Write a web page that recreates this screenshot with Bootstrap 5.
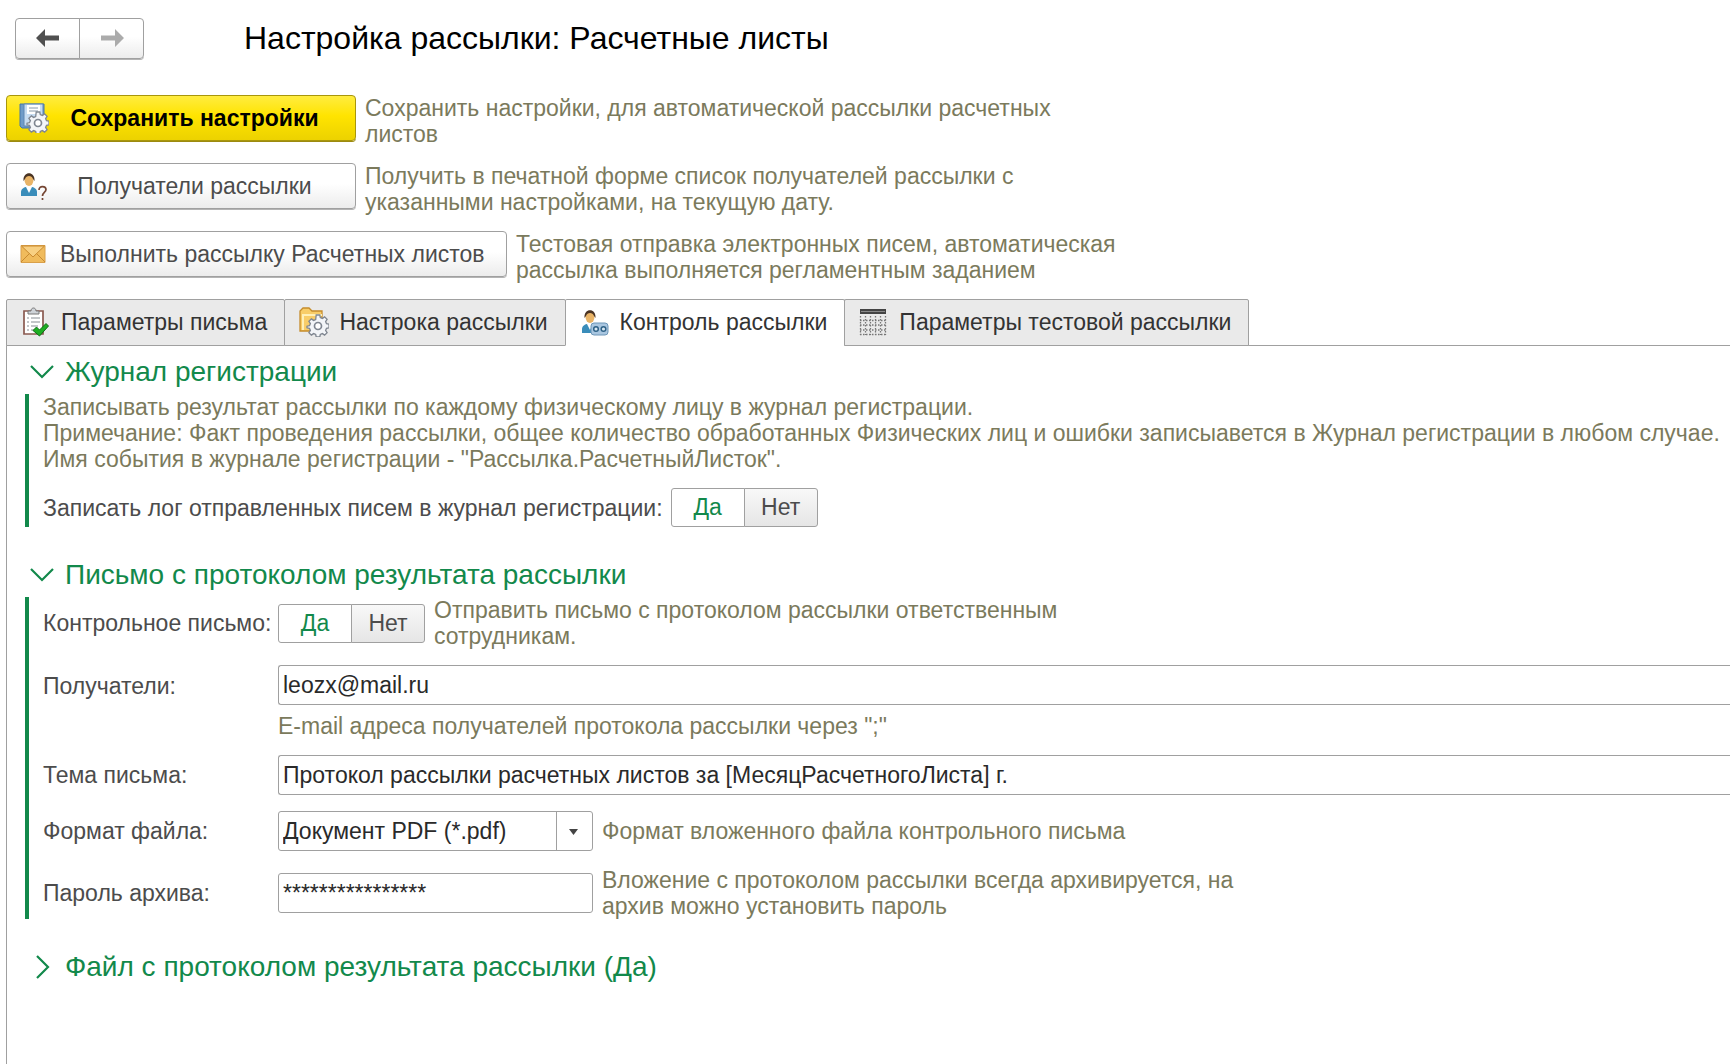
<!DOCTYPE html>
<html lang="ru">
<head>
<meta charset="utf-8">
<meta name="viewport" content="width=device-width, initial-scale=1">
<title>Настройка рассылки: Расчетные листы</title>
<link href="https://cdn.jsdelivr.net/npm/bootstrap@5.3.0/dist/css/bootstrap.min.css" rel="stylesheet">
<style>
  :root { --line: #a0a0a0; --green: #12894b; --note: #7b7a5c; --ink: #4c4c4c; }
  body { font-family: "Liberation Sans", Arial, sans-serif; font-size: 23px; line-height: 26px; color: var(--ink); background: #fff; }
  .page { padding: 17px 0 0 6px; }
  .btn, .form-control, .form-select, .nav-link { font-size: 23px; line-height: 26px; }
  .page-head { padding-left: 9px; margin-bottom: 36px; gap: 100px; }
  .page-title { font-size: 32px; line-height: 42px; color: #000; }
  .btn-soft { --bs-btn-color: var(--ink); --bs-btn-border-color: var(--line); --bs-btn-hover-color: var(--ink); --bs-btn-hover-border-color: #888; --bs-btn-border-radius: 4px;
    background-image: linear-gradient(#fff 45%, #ececec); box-shadow: 0 1px 0 #b4b4b4; }
  .btn-arrow { width: 65px; height: 41px; padding: 0; }
  .btn-arrow svg { display: block; margin: 0 auto; }
  .btn-act { height: 46px; padding: 0 12px; gap: 11px; display: flex; align-items: center; white-space: nowrap; }
  .act-wide { width: 350px; padding-right: 26px; }
  .act-wide .act-text { flex: 1; }
  .act-main { --bs-btn-color: #000; --bs-btn-hover-color: #000; --bs-btn-border-color: #a8960c; --bs-btn-hover-border-color: #8c7c00;
    background-image: linear-gradient(#ffec40, #ffe400 45%, #ecd200); box-shadow: 0 1px 0 #9c8a10; font-weight: 700; }
  .act-long { width: 501px; }
  .act-row { gap: 9px; margin-bottom: 16px; }
  .note { color: var(--note); margin: 0; }
  .ico { width: 30px; height: 30px; flex: none; }
  .nav-tabs { --bs-nav-tabs-border-color: var(--line); }
  .nav-tabs .nav-link { height: 47px; padding: 0 17px 2px 14px; gap: 10px; color: #333; background: #eaeaea; border: 1px solid var(--line); border-radius: 2px 2px 0 0; margin-right: -1px; display: flex; align-items: center; }
  .nav-tabs .nav-link.active { color: #333; background: #fff; border-color: var(--line) var(--line) #fff; }
  .panel { border-left: 1px solid var(--line); padding: 9px 0 0 18px; min-height: calc(100vh - 346px); }
  .group-head { font-size: 28px; line-height: 34px; margin: 0 0 5px; }
  .group-head button { color: var(--green); background: none; border: 0; padding: 0 0 0 5px; gap: 11px; display: flex; align-items: center; }
  .group-head svg { width: 24px; height: 24px; }
  .group-body { border-left: 4px solid var(--green); padding-left: 14px; margin-bottom: 31px; }
  .stack { display: grid; gap: 16px; }
  .fields { display: grid; grid-template-columns: 227px 1fr; gap: 16px 8px; align-items: center; }
  .hint-row { gap: 9px; }
  .toggle { width: 147px; height: 39px; }
  .toggle .btn { --bs-btn-color: var(--ink); --bs-btn-border-color: var(--line); --bs-btn-hover-border-color: var(--line); --bs-btn-hover-color: var(--ink);
    --bs-btn-active-color: var(--green); --bs-btn-active-bg: #fff; --bs-btn-active-border-color: var(--line); --bs-btn-border-radius: 3px;
    flex: 1 1 0; padding: 0; line-height: 37px; background-image: linear-gradient(#f8f8f8, #e6e6e6); }
  .toggle .btn-check:checked + .btn { background-image: none; }
  .form-control, .form-select { height: 40px; padding: 0 4px; color: #2a2a2a; border-color: var(--line); border-radius: 3px; }
  .to-edge { border-right: 0; border-top-right-radius: 0; border-bottom-right-radius: 0; }
  .mid { width: 315px; flex: none; }
  .form-select { background: #fff url("data:image/svg+xml,%3Csvg xmlns='http://www.w3.org/2000/svg' width='36' height='38'%3E%3Cpath d='M.5 0v38' stroke='%23a0a0a0'/%3E%3Cpath d='M13 17h9l-4.500 6z' fill='%23444'/%3E%3C/svg%3E") no-repeat right center / 36px 38px; }
</style>
</head>
<body>
<svg width="0" height="0" class="position-absolute" aria-hidden="true">
  <defs>
    <g id="gear"><path d="M-1.800-9.500h3.600l.5 2.500 2.100.9 2.200-1.500 2.500 2.500-1.500 2.200.9 2.100 2.500.5v3.600l-2.500.5-.9 2.100 1.500 2.200-2.500 2.500-2.200-1.500-2.100.9-.5 2.500h-3.600l-.5-2.500-2.100-.9-2.200 1.500-2.500-2.500 1.500-2.200-.9-2.100-2.500-.5V1.700l2.500-.5.9-2.100-1.500-2.200 2.500-2.500 2.200 1.500 2.100-.9z" transform="translate(0 -1.500)" fill="#f3f5f8" stroke="#7f8690" stroke-width="1.300"/><circle r="3.500" fill="#fff" stroke="#7f8690" stroke-width="1.700"/></g>
    <g id="person"><path d="M1 25v-4c0-3 3-5 6-5h4c3 0 6 2 6 5v4z" fill="#3a8dba"/><path d="M6 16l3 6 3-6z" fill="#fff"/><ellipse cx="9" cy="9" rx="4.500" ry="6" fill="#e9b467"/><path d="M3.500 10C2.500-.5 15.500-.5 14.500 10l-1.500-2c-1-4-7-4-8 0z" fill="#4a3322"/></g>
  </defs>
</svg>
<main class="page">
  <header class="page-head d-flex align-items-center">
    <div class="btn-group">
      <button type="button" class="btn btn-soft btn-arrow" aria-label="Назад"><svg width="26" height="22" viewBox="0 0 26 22"><path d="M1 11l9-9v6.500h14v5H10V20z" fill="#505050"/></svg></button>
      <button type="button" class="btn btn-soft btn-arrow" aria-label="Вперед"><svg width="26" height="22" viewBox="0 0 26 22"><path d="M25 11l-9-9v6.500H2v5h14V20z" fill="#ababab"/></svg></button>
    </div>
    <h1 class="page-title m-0 fw-normal">Настройка рассылки: Расчетные листы</h1>
  </header>

  <div class="act-row d-flex align-items-start">
    <button type="button" class="btn btn-soft btn-act act-wide act-main">
      <svg class="ico" viewBox="0 0 30 30"><path d="M1 1h24v24H3l-2-2z" fill="#6f9bc8" stroke="#4477a8"/><path d="M5 1h19v22H5z" fill="#c6dcf2" stroke="#5e86b2"/><path d="M8 2h13v9H8z" fill="#fff"/><path d="M10 5h9M10 8h9" stroke="#8899aa"/><use href="#gear" x="19" y="20"/></svg>
      <span class="act-text">Сохранить настройки</span>
    </button>
    <p class="note">Сохранить настройки, для автоматической рассылки расчетных<br>листов</p>
  </div>
  <div class="act-row d-flex align-items-start">
    <button type="button" class="btn btn-soft btn-act act-wide">
      <svg class="ico" viewBox="0 0 30 30"><use href="#person" x="1"/><path d="M20 19c0-5 7-4 7-.5 0 3-3.500 3-3.500 6.500M23.500 27v2" fill="none" stroke="#754634" stroke-width="1.700"/></svg>
      <span class="act-text">Получатели рассылки</span>
    </button>
    <p class="note">Получить в печатной форме список получателей рассылки с<br>указанными настройками, на текущую дату.</p>
  </div>
  <div class="act-row d-flex align-items-start">
    <button type="button" class="btn btn-soft btn-act act-long">
      <svg class="ico" viewBox="0 0 30 30"><path d="M2 6.500h24v17H2z" fill="#f0bb5c" stroke="#d9a04a"/><path d="M2 23l9-9M26 23l-9-9" stroke="#c98a30"/><path d="M2.500 7L14 18 25.500 7z" fill="#f8d082" stroke="#c98a30"/></svg>
      <span class="act-text">Выполнить рассылку Расчетных листов</span>
    </button>
    <p class="note">Тестовая отправка электронных писем, автоматическая<br>рассылка выполняется регламентным заданием</p>
  </div>

  <div class="nav nav-tabs" role="tablist">
    <button type="button" class="nav-link" role="tab"><svg class="ico" viewBox="0 0 30 30"><path d="M3 4h19v23H3z" fill="#fff" stroke="#8a5a50" stroke-width="1.700"/><path d="M7 7V4h3c0-4 5-4 5 0h3v3z" fill="#cfd3d8" stroke="#777"/><path d="M6 11h2M10 11h9M6 15h2M10 15h9M6 19h2M10 19h7M6 23h2M10 23h3" stroke="#b0b4b8" stroke-width="1.500"/><path d="M12 23.500l3.500-3.500 3 3 6.500-6.500 2.500 2.500-9 10z" fill="#1eae22" stroke="#0d6f16"/></svg>Параметры письма</button>
    <button type="button" class="nav-link" role="tab"><svg class="ico" viewBox="0 0 30 30"><path d="M1 24V4l3-3h6l3 3h10v20z" fill="#f8cd68" stroke="#c58c2b" stroke-width="1.300"/><path d="M4 23V8h19" fill="none" stroke="#fff0b8" stroke-width="2"/><use href="#gear" x="19" y="19"/></svg>Настрока рассылки</button>
    <button type="button" class="nav-link active" role="tab" aria-selected="true"><svg class="ico" viewBox="0 0 30 30"><use href="#person" x="1" y="1"/><rect x="11" y="16" width="17" height="12" rx="3" fill="#a9c6e0" stroke="#6c96b8"/><g fill="#d9e8f3" stroke="#2f6287" stroke-width="1.500"><circle cx="16" cy="22" r="2.300"/><circle cx="23.500" cy="22" r="2.300"/></g></svg>Контроль рассылки</button>
    <button type="button" class="nav-link" role="tab"><svg class="ico" viewBox="0 0 30 30"><path d="M1 2h26v5H1z" fill="#444"/><path d="M2 4.500h24" stroke="#888"/><g fill="none" stroke="#777" stroke-width="1.300" stroke-dasharray="1.500 1.500"><path d="M1.500 9v19M6.500 9v19M11.500 9v19M16.500 9v19M21.500 9v19M26.500 9v19"/><path d="M1 13.500h26M1 18h26M1 23h26M1 27.500h26"/></g></svg>Параметры тестовой рассылки</button>
  </div>

  <section class="panel">
    <h2 class="group-head"><button type="button" aria-expanded="true"><svg viewBox="0 0 24 24"><path d="M1 6l11 11L23 6" fill="none" stroke="currentColor" stroke-width="2.200"/></svg>Журнал регистрации</button></h2>
    <div class="group-body stack">
      <p class="note">Записывать результат рассылки по каждому физическому лицу в журнал регистрации.<br>Примечание: Факт проведения рассылки, общее количество обработанных Физических лиц и ошибки записыавется в Журнал регистрации в любом случае.<br>Имя события в журнале регистрации - "Рассылка.РасчетныйЛисток".</p>
      <div class="d-flex align-items-center gap-2">
        <span id="log-label">Записать лог отправленных писем в журнал регистрации:</span>
        <div class="btn-group toggle" role="group" aria-labelledby="log-label">
          <input type="radio" class="btn-check" name="log" id="log-yes" checked><label class="btn" for="log-yes">Да</label>
          <input type="radio" class="btn-check" name="log" id="log-no"><label class="btn" for="log-no">Нет</label>
        </div>
      </div>
    </div>

    <h2 class="group-head"><button type="button" aria-expanded="true"><svg viewBox="0 0 24 24"><path d="M1 6l11 11L23 6" fill="none" stroke="currentColor" stroke-width="2.200"/></svg>Письмо с протоколом результата рассылки</button></h2>
    <div class="group-body fields">
      <span id="ctl-label" class="text-nowrap">Контрольное письмо:</span>
      <div class="hint-row d-flex align-items-center">
        <div class="btn-group toggle" role="group" aria-labelledby="ctl-label">
          <input type="radio" class="btn-check" name="ctl" id="ctl-yes" checked><label class="btn" for="ctl-yes">Да</label>
          <input type="radio" class="btn-check" name="ctl" id="ctl-no"><label class="btn" for="ctl-no">Нет</label>
        </div>
        <p class="note">Отправить письмо с протоколом рассылки ответственным<br>сотрудникам.</p>
      </div>
      <label for="to" class="align-self-start pt-2">Получатели:</label>
      <div>
        <input id="to" type="text" class="form-control to-edge mb-2" value="leozx@mail.ru">
        <p class="note">E-mail адреса получателей протокола рассылки через ";"</p>
      </div>
      <label for="subject">Тема письма:</label>
      <input id="subject" type="text" class="form-control to-edge" value="Протокол рассылки расчетных листов за [МесяцРасчетногоЛиста] г.">
      <label for="format">Формат файла:</label>
      <div class="hint-row d-flex align-items-center">
        <select id="format" class="form-select mid"><option>Документ PDF (*.pdf)</option></select>
        <p class="note">Формат вложенного файла контрольного письма</p>
      </div>
      <label for="pass">Пароль архива:</label>
      <div class="hint-row d-flex align-items-center">
        <input id="pass" type="text" class="form-control mid" value="****************">
        <p class="note">Вложение с протоколом рассылки всегда архивируется, на<br>архив можно установить пароль</p>
      </div>
    </div>

    <h2 class="group-head"><button type="button" aria-expanded="false"><svg viewBox="0 0 24 24"><path d="M7 1l11 11L7 23" fill="none" stroke="currentColor" stroke-width="2.200"/></svg>Файл с протоколом результата рассылки (Да)</button></h2>
  </section>
</main>
<script src="https://cdn.jsdelivr.net/npm/bootstrap@5.3.0/dist/js/bootstrap.bundle.min.js"></script>
</body>
</html>
